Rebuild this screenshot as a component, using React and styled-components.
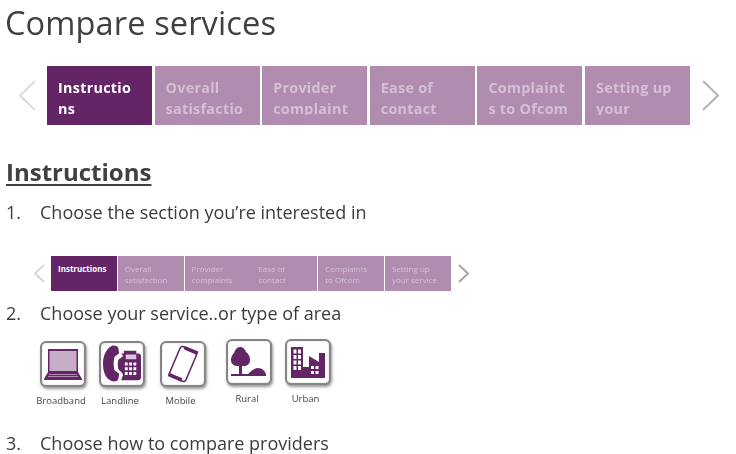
import React from 'react';
import styled, { createGlobalStyle } from 'styled-components';

const Global = createGlobalStyle`
  html, body { margin: 0; padding: 0; background: #fff; }
  body { width: 736px; height: 454px; overflow: hidden; font-family: "Open Sans", "Liberation Sans", sans-serif; color: #3a3a3a; }
`;
const Page = styled.div`
  display: flex; flex-direction: column; padding: 0 0 0 6px; height: 454px; box-sizing: border-box; overflow: hidden;
  filter: blur(0.3px);
`;
const Title = styled.h1`
  margin: 3px 0 0 -1px; font-size: 32.6px; line-height: 40px; font-weight: 400; color: #404040; letter-spacing: 0.1px;
`;
const Carousel = styled.div`
  display: flex; align-items: center; margin: ${p => p.$small ? '32px 0 0 26px' : '23px 0 0 10px'};
  ${p => p.$small && 'filter: blur(0.5px);'}
`;
const Arrow = styled.svg`
  flex: none; display: block; margin: ${p => p.$m};
`;
const Tabs = styled.div`
  display: flex; gap: ${p => p.$small ? '0.8px' : '2.6px'};
`;
const Tab = styled.div`
  box-sizing: border-box; flex: none;
  width: ${p => p.$small ? '66px' : '105px'};
  height: ${p => p.$small ? '35px' : '59px'};
  padding: ${p => p.$small ? '7px 9px 0 7px' : '11px 13.5px 0 11px'};
  background: ${p => p.$active ? '#642567' : '#b08cb1'};
  color: ${p => p.$active ? '#fff' : '#d5c0d6'};
  font-weight: ${p => (p.$active || !p.$small) ? 700 : 400};
  font-size: ${p => p.$small ? '8px' : '14.3px'};
  line-height: ${p => p.$small ? '11px' : '21px'};
  letter-spacing: ${p => p.$small ? '0' : '0.3px'};
  overflow-wrap: anywhere;
`;
const TabText = styled.div`
  overflow: hidden; height: ${p => p.$small ? '24px' : '38px'};
`;
const Heading = styled.h2`
  margin: 31px 0 0; font-size: 24px; line-height: 32px; font-weight: 700; color: #404040; text-decoration: underline; text-decoration-thickness: 2px; text-underline-offset: 3px;
`;
const Step = styled.div`
  display: flex; font-size: 18px; line-height: 24px; color: #3c3c3c; margin: ${p => p.$m};
`;
const Num = styled.span`
  width: 34px; flex: none;
`;
const IconRow = styled.div`
  display: flex; margin: 16px 0 0 27px;
`;
const Item = styled.div`
  display: flex; flex-direction: column; align-items: center; flex: none; width: ${p => p.$w}px; margin-top: ${p => p.$top}px;
`;
const Card = styled.div`
  box-sizing: border-box; width: 46px; height: 46px; border-radius: 6px; background: #fff;
  border: 2px solid #858585; box-shadow: 1px 2px 3px #999, inset 0 0 2px #ccc;
  display: flex; align-items: center; justify-content: center;
`;
const Label = styled.span`
  margin: 8px 4px 0 0; font-size: 9.5px; line-height: 12px; color: #444; white-space: nowrap;
`;

const P = '#642567';
const Laptop = () => (
  <svg width="38" height="31" viewBox="0 0 38 31">
    <path fill={P} d="M4 0h30v23H4z" />
    <path fill="#c6aec8" d="M5.500 2h27v20h-27z" />
    <path fill={P} d="M4 23h30l4 7v1H0v-1z" />
    <path stroke="#b08cb1" strokeWidth="1" d="M5 25.500h28M4 27.500h30" />
  </svg>
);
const Phone = () => (
  <svg width="38" height="40" viewBox="0 0 40 40">
    <path fill={P} d="M9 1c3-1 6 0 7 2l1 5c0 2-4 3-5 5-1 3-1 10 0 13 1 2 5 3 5 5l-1 5c-1 2-4 3-7 2C2 35 0 27 0 20S2 5 9 1z" />
    <path fill={P} d="M19 9h3V6h13v3h2a3 3 0 0 1 3 3v22a3 3 0 0 1-3 3H19l2-5c0-3-4-5-5-7-.5-3-.5-7 0-9 1-2 5-3 5-5z" />
    <path fill="#d9c6da" d="M24 10h11v5H24z" />
    <path stroke="#fff" strokeWidth="3" strokeDasharray="3 1.500" d="M23 20h13M23 25h13M23 30h13" />
  </svg>
);
const Mobile = () => (
  <svg width="32" height="40" viewBox="0 0 36 40">
    <rect x="8" y="2" width="20" height="36" rx="3" transform="rotate(23 18 20)" fill="none" stroke={P} strokeWidth="1.800" />
    <path stroke={P} strokeWidth="4" d="M19.500 1.500l15 6.400M1.600 31.600l15 6.400" />
  </svg>
);
const Tree = () => (
  <svg width="36" height="30" viewBox="0 0 36 30">
    <path fill={P} d="M9 0c3 0 5 2 6 5 3 2 4 5 4 8 0 4-3 6-6 6h-2v8h-3v-8H7c-4 0-7-2-7-6 0-3 1-5 3-7 1-3 3-6 6-6z" />
    <path fill={P} d="M0 27h17c3-3 7-6 10-6 4 0 7 3 8 6v2H0z" />
  </svg>
);
const City = () => (
  <svg width="34" height="31" viewBox="0 0 34 31">
    <path fill={P} fillRule="evenodd" d="M0 0h12v20h6V9l10 6V6h6v25H0zM2.500 2.500v4h3v-4zm4.500 0v4h3v-4zM2.500 8v4h3V8zM7 8v4h3V8zM2.500 13.500v4h3v-4zm4.500 0v4h3v-4zM2.500 19v4h3v-4zM7 19v4h3v-4zm13 0v3h3v-3zm4.500 0v3h3v-3zM20 24v3h3v-3zm4.500 0v3h3v-3z" />
  </svg>
);

const Chevron = ({ dir, w, h, color, sw, m }) => (
  <Arrow width={w} height={h} viewBox={`0 0 ${w} ${h}`} $m={m}>
    <path
      d={dir === 'left' ? `M${w - 1} 1L1 ${h / 2}L${w - 1} ${h - 1}` : `M1 1L${w - 1} ${h / 2}L1 ${h - 1}`}
      fill="none" stroke={color} strokeWidth={sw}
    />
  </Arrow>
);

const bigTabs = ['Instructions', 'Overall satisfaction', 'Provider complaints', 'Ease of contact', 'Complaints to Ofcom', 'Setting up your service'];

export default function App() {
  return (
    <Page>
      <Global />
      <Title>Compare services</Title>
      <Carousel>
        <Chevron dir="left" w={17} h={31} color="#dcdcdc" sw={2} m="0 11px 0 3px" />
        <Tabs>
          {bigTabs.map((t, i) => <Tab key={t} $active={i === 0}><TabText>{t}</TabText></Tab>)}
        </Tabs>
        <Chevron dir="right" w={17} h={31} color="#b4b4b4" sw={2} m="0 0 0 12px" />
      </Carousel>
      <Heading>Instructions</Heading>
      <Step $m="12px 0 0"><Num>1.</Num>Choose the section you’re interested in</Step>
      <Carousel $small>
        <Chevron dir="left" w={11} h={19} color="#d8d8d8" sw={2} m="0 6px 0 2px" />
        <Tabs $small>
          {bigTabs.map((t, i) => <Tab key={t} $small $active={i === 0}><TabText $small>{t}</TabText></Tab>)}
        </Tabs>
        <Chevron dir="right" w={11} h={19} color="#a8a8a8" sw={2} m="0 0 0 7px" />
      </Carousel>
      <Step $m="10px 0 0"><Num>2.</Num>Choose your service..or type of area</Step>
      <IconRow>
        <Item $w={60} $top={0}><Card><Laptop /></Card><Label>Broadband</Label></Item>
        <Item $w={58} $top={0}><Card><Phone /></Card><Label>Landline</Label></Item>
        <Item $w={63} $top={0}><Card><Mobile /></Card><Label>Mobile</Label></Item>
        <Item $w={70} $top={-2}><Card><Tree /></Card><Label>Rural</Label></Item>
        <Item $w={47} $top={-2}><Card><City /></Card><Label>Urban</Label></Item>
      </IconRow>
      <Step $m="24px 0 0"><Num>3.</Num>Choose how to compare providers</Step>
    </Page>
  );
}
